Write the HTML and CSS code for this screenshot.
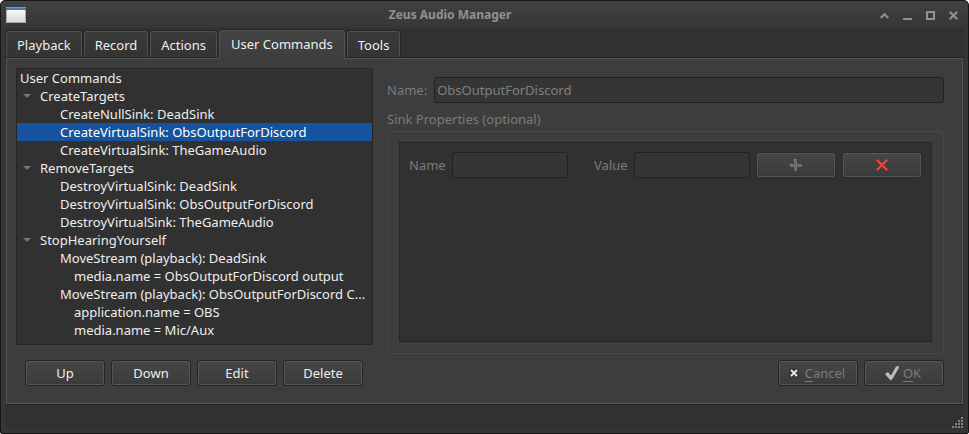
FILE: index.html
```html
<!DOCTYPE html>
<html lang="en">
<head>
<meta charset="utf-8">
<title>Zeus Audio Manager</title>
<link rel="stylesheet" href="styles.css">
</head>
<body>
<div class="window">
  <header class="titlebar">
    <svg class="app-icon" width="20" height="16" viewBox="0 0 20 16"><defs><linearGradient id="paper" x2="0" y2="1"><stop offset="0" stop-color="#fff"/><stop offset="1" stop-color="#d8d9d5"/></linearGradient></defs><path fill="url(#paper)" d="M0 0h20v16H0z"/><path fill="#4b74b0" d="M0 0h20v3H0z"/><path fill="#8298bb" d="M0 0h20v1H0z"/><path fill="none" stroke="#aaa" d="M.5 3v12.500h19V3"/></svg>
    <h1 class="title">Zeus Audio Manager</h1>
    <div class="window-controls">
      <button class="control" aria-label="Shade"><svg width="9" height="9" viewBox="0 0 9 9"><path d="M.7 7 4.500 3.200 8.300 7"/></svg></button>
      <button class="control" aria-label="Minimize"><svg width="9" height="9" viewBox="0 0 9 9"><path d="M0 8h9"/></svg></button>
      <button class="control" aria-label="Maximize"><svg width="9" height="9" viewBox="0 0 9 9"><path d="M1 1h7v7H1z"/></svg></button>
      <button class="control" aria-label="Close"><svg width="9" height="9" viewBox="0 0 9 9"><path d="m.7.7 7.600 7.600m0-7.600L.7 8.300"/></svg></button>
    </div>
  </header>
  <main class="client">
    <div class="tabs" role="tablist">
      <button class="tab" role="tab">Playback</button>
      <button class="tab" role="tab">Record</button>
      <button class="tab" role="tab">Actions</button>
      <button class="tab tab-active" role="tab" aria-selected="true">User Commands</button>
      <button class="tab" role="tab">Tools</button>
    </div>
    <section class="panel" role="tabpanel">
      <div class="commands">
        <div class="tree">
          <div class="row">User Commands</div>
          <div class="row parent">CreateTargets</div>
          <div class="row child">CreateNullSink: DeadSink</div>
          <div class="row child selected">CreateVirtualSink: ObsOutputForDiscord</div>
          <div class="row child">CreateVirtualSink: TheGameAudio</div>
          <div class="row parent">RemoveTargets</div>
          <div class="row child">DestroyVirtualSink: DeadSink</div>
          <div class="row child">DestroyVirtualSink: ObsOutputForDiscord</div>
          <div class="row child">DestroyVirtualSink: TheGameAudio</div>
          <div class="row parent">StopHearingYourself</div>
          <div class="row child">MoveStream (playback): DeadSink</div>
          <div class="row detail">media.name = ObsOutputForDiscord output</div>
          <div class="row child">MoveStream (playback): ObsOutputForDiscord C...</div>
          <div class="row detail">application.name = OBS</div>
          <div class="row detail">media.name = Mic/Aux</div>
        </div>
        <div class="buttons">
          <button class="button">Up</button>
          <button class="button">Down</button>
          <button class="button">Edit</button>
          <button class="button">Delete</button>
        </div>
      </div>
      <form class="editor">
        <div class="field">
          <label for="sink-name">Name:</label>
          <input class="input" id="sink-name" value="ObsOutputForDiscord" disabled>
        </div>
        <div class="group-title" id="group-title">Sink Properties (optional)</div>
        <div class="group" role="group" aria-labelledby="group-title">
          <div class="properties">
            <div class="property">
              <label for="prop-name">Name</label>
              <input class="input" id="prop-name" disabled>
              <label class="value-label" for="prop-value">Value</label>
              <input class="input" id="prop-value" disabled>
              <div class="buttons property-buttons">
                <button class="button" type="button" aria-label="Add" disabled><svg width="12" height="12" viewBox="0 0 12 12"><path fill="#6a6c6e" d="M4 0h3v5h5v3H7v4H4V8H0V5h4z"/><path fill="#929496" d="M4 0h1v2H4zM0 5h2v1H0z"/></svg></button>
                <button class="button" type="button" aria-label="Remove" disabled><svg width="12" height="12" viewBox="0 0 12 12"><path fill="none" stroke="#f44336" stroke-width="2.200" d="m.8.8 10.400 10.400m0-10.400L.8 11.200"/></svg></button>
              </div>
            </div>
          </div>
        </div>
        <div class="buttons dialog-buttons">
          <button class="button" type="button" disabled><svg class="cancel-icon" width="10" height="10" viewBox="0 0 10 10"><path fill="#383838" d="M0 0h10v10H0z"/><path fill="none" stroke="#e8e8e4" stroke-width="1.800" d="m2 2 6 6m0-6L2 8"/></svg><span><u>C</u>ancel</span></button>
          <button class="button" type="button" disabled><svg width="15" height="15" viewBox="0 0 15 15"><path fill="#bdbdbd" d="m0 8 3-2 3 3.500L11 .5l2.500-.5.5 1.500L7.500 13 5.500 14.500z"/></svg><span><u>O</u>K</span></button>
        </div>
      </form>
    </section>
    <footer class="statusbar">
      <svg width="12" height="12" viewBox="0 0 12 12"><path fill="#858585" d="M9 0h2v2H9zM6 3h2v2H6zM9 3h2v2H9zM3 6h2v2H3zM6 6h2v2H6zM9 6h2v2H9zM0 9h2v2H0zM3 9h2v2H3zM6 9h2v2H6zM9 9h2v2H9z"/></svg>
    </footer>
  </main>
</div>
</body>
</html>
```
FILE: styles.css
```css
* { box-sizing: border-box; }

body {
  margin: 0;
  background: #fff;
  color: #eee;
  font: 13px/18px "Noto Sans", sans-serif;
}

button, input { font: inherit; color: inherit; }
svg { display: block; flex: none; }

.window {
  display: flex;
  flex-direction: column;
  min-height: 100vh;
  padding: 0 4px 4px;
  border: 1px solid #161616;
  border-radius: 5px 5px 2px 2px;
  background: #363636;
  background-image: linear-gradient(#414141, #363636 27px);
}

.titlebar {
  display: grid;
  grid-template-columns: auto 1fr auto;
  align-items: center;
  height: 28px;
  margin-bottom: -1px;
  padding: 0 6px 0 1px;
}

.title {
  margin: 0;
  padding-right: 6px;
  color: #919191;
  font-size: 12px;
  font-weight: 700;
  text-align: center;
}

.window-controls {
  display: flex;
  gap: 14px;
}

.control {
  padding: 0;
  border: 0;
  background: none;
}

.control path {
  fill: none;
  stroke: #919191;
  stroke-width: 2;
}

.client {
  display: flex;
  flex: 1;
  flex-direction: column;
  background: #313131;
}

.tabs {
  display: flex;
  align-items: flex-end;
  gap: 2px;
  padding: 2px 1px 0;
  border-bottom: 1px solid #222;
}

.tab {
  height: 26px;
  padding: 0 10px;
  border: 1px solid #505050;
  border-bottom: 0;
  border-radius: 3px 3px 0 0;
  background: linear-gradient(#3a3a3a, #343434);
  box-shadow: 0 0 0 1px #262626;
}

.tab-active {
  position: relative;
  height: 29px;
  margin-bottom: -2px;
  padding: 0 11px 2px;
  background: linear-gradient(#434343, #3e3e3e);
  box-shadow: 0 -1px 0 #262626;
}

.panel {
  display: grid;
  flex: 1;
  grid-template-columns: 357fr 557fr;
  gap: 14px;
  padding: 9px 18px 17px 9px;
  margin-right: 1px;
  margin-left: 1px;
  border: 1px solid #555;
  background: #3d3d3d;
  box-shadow: 0 1px 0 #222;
}

.commands, .editor {
  display: flex;
  flex-direction: column;
  min-width: 0;
}

.tree {
  flex: 1;
  margin-bottom: 15px;
  border: 1px solid #262626;
  background: #313131;
}

.row {
  height: 18px;
  padding-left: 3px;
  overflow: hidden;
  white-space: nowrap;
}

.parent {
  display: flex;
  align-items: center;
  gap: 9px;
  padding-left: 6px;
}

.parent::before {
  content: "";
  border: 4px solid transparent;
  border-top-color: #777;
  border-bottom: 0;
}

.child { padding-left: 43px; }
.detail { padding-left: 57px; }
.selected { background: #15539e; color: #fff; }

.buttons {
  display: flex;
  gap: 6px;
}

.commands .buttons { padding-left: 9px; }

.button {
  display: flex;
  align-items: center;
  justify-content: center;
  gap: 3px;
  width: 80px;
  height: 26px;
  padding: 0;
  border: 1px solid #252525;
  border-radius: 3px;
  background: linear-gradient(#464646, #3a3a3a);
  box-shadow: inset 0 0 0 1px #555;
}

.button:disabled { color: #7b7b7b; }

.button u {
  text-decoration-skip-ink: none;
  text-underline-offset: 3px;
}

.cancel-icon { margin-right: 3px; }

.dialog-buttons .button { padding-right: 2px; }

.editor {
  padding-top: 9px;
  color: #7b7b7b;
}

.field {
  display: flex;
  align-items: center;
  gap: 7px;
}

.input {
  flex: 1;
  width: 0;
  min-width: 0;
  height: 26px;
  padding: 0 2px;
  border: 1px solid #222;
  border-radius: 3px;
  background: #353535;
  color: #808080;
}

.group-title { margin: 7px 0 3px; }

.group {
  display: flex;
  flex: 1;
  margin: 0 0 6px 1px;
  padding: 10px 11px 11px 10px;
  border: 1px solid #484848;
  border-radius: 2px;
}

.properties {
  flex: 1;
  min-width: 0;
  padding: 9px;
  border: 1px solid #262626;
  background: #313131;
}

.property {
  display: flex;
  align-items: center;
  gap: 6px;
}

.property .button { border-color: #2b2b2b; }
.value-label { margin-left: 20px; }
.dialog-buttons { justify-content: flex-end; }

.statusbar {
  display: flex;
  align-items: flex-end;
  justify-content: flex-end;
  height: 25px;
}
```
